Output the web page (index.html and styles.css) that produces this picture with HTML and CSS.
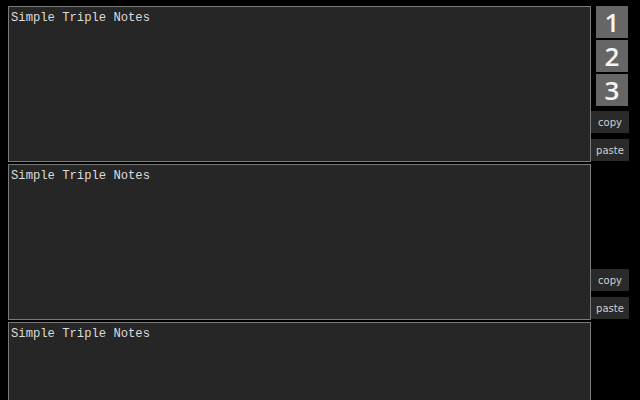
FILE: index.html
```html
<!DOCTYPE html>
<html>
<head>
<meta charset="utf-8">
<link rel="stylesheet" href="styles.css">
</head>
<body>
<div class="notes">
  <div class="row">
    <textarea class="note">Simple Triple Notes</textarea>
    <div class="side">
      <div class="tabs">
        <button class="tab">1</button>
        <button class="tab">2</button>
        <button class="tab">3</button>
      </div>
      <div class="actions">
        <button class="act">copy</button>
        <button class="act">paste</button>
      </div>
    </div>
  </div>
  <div class="row">
    <textarea class="note">Simple Triple Notes</textarea>
    <div class="side">
      <div class="actions">
        <button class="act">copy</button>
        <button class="act">paste</button>
      </div>
    </div>
  </div>
  <div class="row">
    <textarea class="note">Simple Triple Notes</textarea>
    <div class="side"></div>
  </div>
</div>
</body>
</html>
```
FILE: styles.css
```css
html, body {
  margin: 0;
  background: #000;
}
body {
  padding: 6px 11px 0 8px;
  height: 400px;
  box-sizing: border-box;
  overflow: hidden;
}
.notes {
  display: flex;
  flex-direction: column;
  gap: 2px;
}
.row {
  display: flex;
  height: 156px;
}
.note {
  flex: 1;
  margin: 0;
  box-sizing: border-box;
  height: 156px;
  background: #262626;
  border: 1px solid #7a7a7a;
  color: #dcdcdc;
  font-family: "Liberation Mono", monospace;
  font-size: 12.2px;
  line-height: 15px;
  padding: 4px 2px;
  resize: none;
  outline: none;
}
.side {
  width: 38px;
  display: flex;
  flex-direction: column;
  justify-content: flex-end;
}
.tabs {
  display: flex;
  flex-direction: column;
  gap: 2px;
  padding-left: 5px;
  margin-bottom: auto;
}
.tab {
  width: 32px;
  height: 32px;
  padding: 0;
  border: 0;
  background: #666;
  color: #f4f4f4;
  font-family: "Open Sans", sans-serif;
  font-weight: 600;
  font-size: 26px;
  line-height: 32px;
}
.actions {
  display: flex;
  flex-direction: column;
  gap: 6px;
  margin-bottom: 1px;
}
.act {
  height: 22px;
  width: 38px;
  padding: 0;
  border: 0;
  background: #2a2a2a;
  color: #cfcfcf;
  font-family: "DejaVu Sans", sans-serif;
  font-size: 10px;
}
```
